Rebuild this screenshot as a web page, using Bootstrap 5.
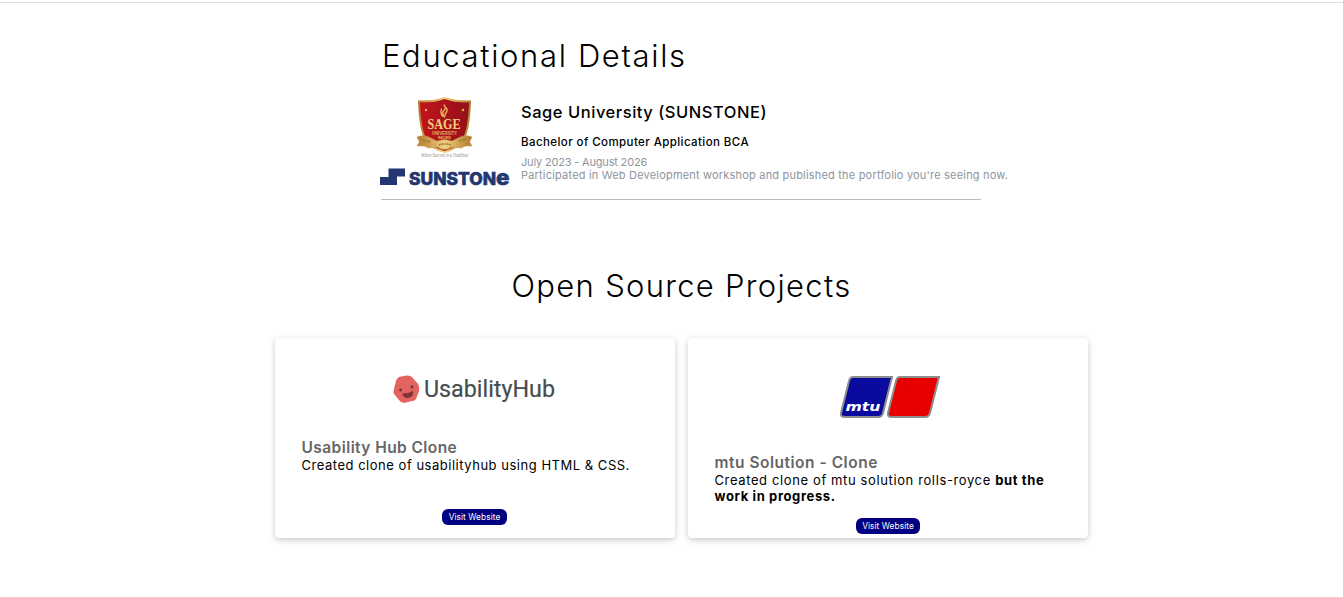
<!DOCTYPE html>
<html lang="en">
<head>
<meta charset="utf-8">
<meta name="viewport" content="width=device-width, initial-scale=1">
<title>Portfolio</title>
<link rel="stylesheet" href="https://cdn.jsdelivr.net/npm/bootstrap@5.3.0/dist/css/bootstrap.min.css">
<style>
  body { font-family: Inter, "Open Sans", sans-serif; color: #000; background: #fff; }
  .top-rule { height: 3px; border-bottom: 1px solid #e0e0e0; }
  main { padding-left: 20px; padding-bottom: 40px; }
  .section-title { font-size: 31px; font-weight: 300; line-height: 40px; letter-spacing: 1.3px; white-space: nowrap; }
  .edu-title { letter-spacing: 1.65px; padding-left: 1px; }
  .education { width: 600px; margin-left: 361px; padding-top: 33px; }
  .school { height: 124px; border-bottom: 1px solid #bdbdbd; }
  .logos { width: 140px; margin-left: -1px; padding-top: 20px; }
  .logos svg, .shot { display: block; overflow: visible; }
  .crest { margin-left: 35px; }
  .school-info { margin-left: 1px; }
  .school-name { font-size: 16.5px; font-weight: 500; line-height: 20px; letter-spacing: .53px; padding-top: 26px; margin-bottom: 13px; }
  .degree { font-size: 11.5px; font-weight: 500; line-height: 15px; letter-spacing: .42px; margin-bottom: 6px; }
  .facts { font-size: 11px; line-height: 13px; color: #8e959c; letter-spacing: .19px; white-space: nowrap; }
  .date { letter-spacing: -.18px; }
  .projects { width: 813px; margin-left: 255px; padding-top: 66px; }
  .project { width: 400px; height: 200px; border: 0; border-radius: 4px; box-shadow: 0 2px 6px rgba(0,0,0,.22); }
  .project-text { padding: 0 25px 0 26.5px; }
  .project-title { font-size: 15.5px; font-weight: 600; color: #666; line-height: 19px; letter-spacing: .42px; margin: 0; }
  .mtu-title { letter-spacing: .52px; }
  .project-copy { font-size: 13px; line-height: 16px; letter-spacing: .52px; margin: 0; }
  .mtu-copy { letter-spacing: .62px; }
  .visit { --bs-btn-padding-x: 0; --bs-btn-padding-y: 0; --bs-btn-bg: #000080; --bs-btn-color: #fff; --bs-btn-border-width: 0;
    width: 65px; height: 16px; line-height: 16px; font-size: 8.3px; border-radius: 6px; letter-spacing: .08px; margin: auto 0 13px 167px; }
  .visit-mtu { width: 64px; margin: auto 0 4px 168px; }
</style>
</head>
<body>
<div class="top-rule"></div>
<main>
  <section class="education">
    <h1 class="section-title edu-title m-0">Educational Details</h1>
    <div class="school d-flex">
      <div class="logos flex-shrink-0">
        <svg class="crest" width="60" height="64" viewBox="0 0 60 64">
          <defs>
            <linearGradient id="gold" x1="0" x2="1"><stop offset="0" stop-color="#b07a28"/><stop offset=".5" stop-color="#efd083"/><stop offset="1" stop-color="#b07a28"/></linearGradient>
            <linearGradient id="red" x1="0" x2="1"><stop offset="0" stop-color="#c2141c"/><stop offset="1" stop-color="#94101a"/></linearGradient>
          </defs>
          <path d="M3 4.500Q18 5 29.500 1Q42 5 56 4.500Q55 36 48 46Q41 54 29.500 57Q18 54 11 46Q4 36 3 4.500Z" fill="url(#gold)"/>
          <path d="M5 6.500Q19 7 29.500 3Q41 7 54 6.500Q53 34 47 44Q40 52 29.500 55Q19 52 12 44Q6 34 5 6.500Z" fill="url(#red)"/>
          <g fill="none" stroke="#edbd62" stroke-width="1.300" stroke-linecap="round"><path d="M29 9Q32 12 28.500 15Q27 17 28.500 20M31.500 12Q33 15 30.500 17.500L29.500 21M26.500 13Q25 17 27.500 20"/></g>
          <g fill="#e8b756"><circle cx="11" cy="14" r="1.200"/><circle cx="48" cy="14" r="1.200"/></g>
          <text x="12.500" y="33" font-family="Liberation Serif, serif" font-size="14" font-weight="700" fill="#f3d27e" textLength="33" lengthAdjust="spacingAndGlyphs">SAGE</text>
          <text x="17" y="38.600" font-family="Liberation Sans, sans-serif" font-size="4.700" font-weight="700" fill="#e5ae55" textLength="25" lengthAdjust="spacingAndGlyphs">UNIVERSITY</text>
          <text x="23" y="43" font-family="Liberation Sans, sans-serif" font-size="3.800" font-weight="700" fill="#e5ae55" textLength="13">INDORE</text>
          <path d="M2 41Q9 38 16 42L22 45Q29.500 42 37 45L43 42Q50 38 57 41L54.500 46L57 50Q50 49 46 52L37 51Q29.500 56 22 51L14 52Q9 49 2 50L4.500 46Z" fill="url(#gold)" stroke="#c38c38" stroke-width=".5"/>
          <g fill="none" stroke="#94672c" stroke-width="1.500" stroke-dasharray="1 .6"><path d="M8 44L15 46M24 49Q30 47 36 49M44 45L51 43"/></g>
          <text x="6" y="61" font-family="Liberation Serif, serif" font-size="5.600" font-style="italic" fill="#858585" textLength="47" lengthAdjust="spacingAndGlyphs">Where Success is a Tradition</text>
        </svg>
        <svg class="mt-2" width="132" height="20" viewBox="0 0 132 20">
          <path d="M8.500 .5H25V8.500H17V17H0V9H8.500Z" fill="#23366f"/>
          <g fill="#23366f" stroke="#23366f" stroke-width=".6" font-family="Inter, sans-serif" font-weight="800">
            <text x="29" y="17" font-size="17.300" textLength="87" lengthAdjust="spacingAndGlyphs">SUNSTON</text>
            <text x="116" y="17" font-size="21.500" textLength="13.500" lengthAdjust="spacingAndGlyphs">e</text>
          </g>
        </svg>
      </div>
      <div class="school-info">
        <h2 class="school-name">Sage University (SUNSTONE)</h2>
        <div class="degree">Bachelor of Computer Application BCA</div>
        <div class="facts date">July 2023 - August 2026</div>
        <div class="facts">Participated in Web Development workshop and published the portfolio you're seeing now.</div>
      </div>
    </div>
  </section>
  <section class="projects">
    <h1 class="section-title text-center mb-4 pb-2">Open Source Projects</h1>
    <div class="d-flex justify-content-between">
      <article class="card project">
        <svg class="shot" width="400" height="100" viewBox="0 0 400 100">
          <path d="M124 39Q134 36 137 39L143 46Q145 49 144 53L141 61Q140 63 137 63L129 65Q126 65 124 62L119 56Q118 54 119 51L121 43Q122 40 124 39Z" fill="#e3645f"/>
          <circle cx="125.500" cy="52" r="1.400" fill="#68343b"/><circle cx="137" cy="49" r="1.400" fill="#68343b"/>
          <path d="M127 55.500Q132 56 138 53Q139 59 133 60Q129 60.500 127 55.500Z" fill="#823333"/>
          <text x="149" y="59" font-family="Roboto, sans-serif" font-size="24" fill="#454d4d" stroke="#454d4d" stroke-width=".2" textLength="131" lengthAdjust="spacingAndGlyphs">UsabilityHub</text>
        </svg>
        <div class="project-text">
          <h3 class="project-title">Usability Hub Clone</h3>
          <p class="project-copy">Created clone of usabilityhub using HTML &amp; CSS.</p>
        </div>
        <button class="btn visit">Visit Website</button>
      </article>
      <article class="card project">
        <svg class="shot" width="400" height="115" viewBox="0 0 400 115">
          <g stroke="#8d8d8d" stroke-width="2">
            <path d="M165 39H204L195 75Q194 79 190 79H157Q152 79 153 75L161 43Q162 39 165 39Z" fill="#0a0a9e"/>
            <path d="M212 39H251L242 75Q241 79 237 79H204Q199 79 200 75L208 43Q209 39 212 39Z" fill="#e80000"/>
          </g>
          <text x="157.500" y="73" font-family="DejaVu Sans, sans-serif" font-size="12.500" font-weight="700" font-style="italic" fill="#fff" textLength="35" lengthAdjust="spacingAndGlyphs">mtu</text>
        </svg>
        <div class="project-text">
          <h3 class="project-title mtu-title">mtu Solution - Clone</h3>
          <p class="project-copy mtu-copy">Created clone of mtu solution rolls-royce <b>but the work in progress.</b></p>
        </div>
        <button class="btn visit visit-mtu">Visit Website</button>
      </article>
    </div>
  </section>
</main>
<script src="https://cdn.jsdelivr.net/npm/bootstrap@5.3.0/dist/js/bootstrap.bundle.min.js"></script>
</body>
</html>
